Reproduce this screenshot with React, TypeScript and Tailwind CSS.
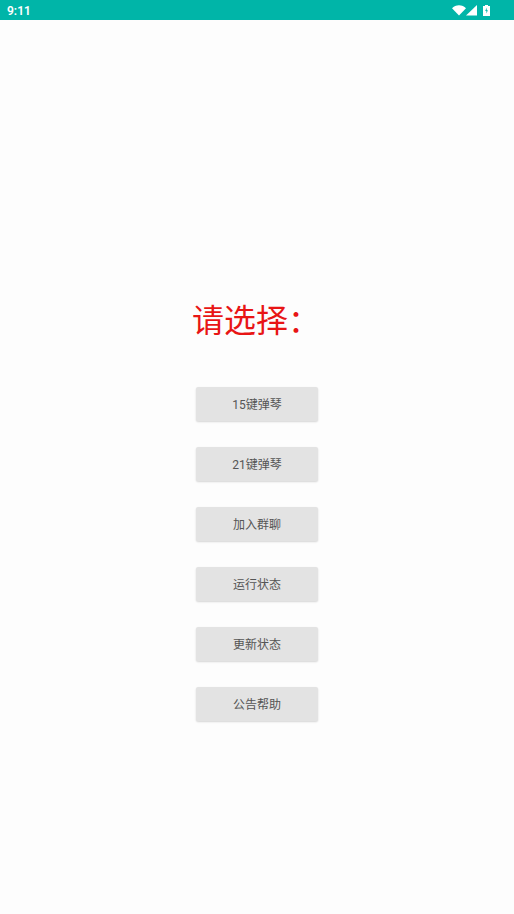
const buttons = ['15键弹琴', '21键弹琴', '加入群聊', '运行状态', '更新状态', '公告帮助']

const cjk = "font-['Roboto','Noto_Sans_CJK_SC',sans-serif]"

function StatusBar() {
  return (
    <div className="flex h-5 items-center justify-between bg-[#00b5a8] pl-[7px] pr-[24px] text-white">
      <span className="pt-[1px] text-xs font-semibold font-['Roboto',sans-serif]">9:11</span>
      <div className="flex items-center">
        <svg width="14" height="11" viewBox="0 0 14 11" fill="white">
          <path d="M0 3.2C1.8 1.4 4.2 0.3 7 0.3s5.2 1.1 7 2.9L7 10.6z" />
        </svg>
        <svg width="11" height="11" viewBox="0 0 11 11" fill="white">
          <path d="M11 0v10.6H0z" />
        </svg>
        <svg width="7" height="11" viewBox="0 0 7 11" className="ml-[6px]">
          <path d="M2 0h3v1h2v10H0V1h2z" fill="white" />
          <path d="M3.8 2.6 2.2 6h1.2v2.6L4.9 5.2H3.7z" fill="#00b5a8" />
        </svg>
      </div>
    </div>
  )
}

export default function App() {
  return (
    <div className={`flex h-[914px] w-[514px] flex-col overflow-hidden bg-[#fdfdfd] ${cjk}`}>
      <StatusBar />
      <div className="flex flex-col items-center pt-[278px]">
        <h1 className="w-[128px] translate-x-[-1px] whitespace-nowrap text-[32px] leading-[46px] font-normal text-[#e81515]">
          请选择：
        </h1>
        <div className="mt-[43px] flex flex-col gap-[26px]">
          {buttons.map(label => (
            <button
              key={label}
              className="h-[34px] w-[122px] rounded-[2px] bg-[#e3e3e3] pt-[1px] text-[12px] text-[#555555] shadow-[0_1px_2px_rgba(0,0,0,0.16)]"
            >
              {label}
            </button>
          ))}
        </div>
      </div>
    </div>
  )
}
